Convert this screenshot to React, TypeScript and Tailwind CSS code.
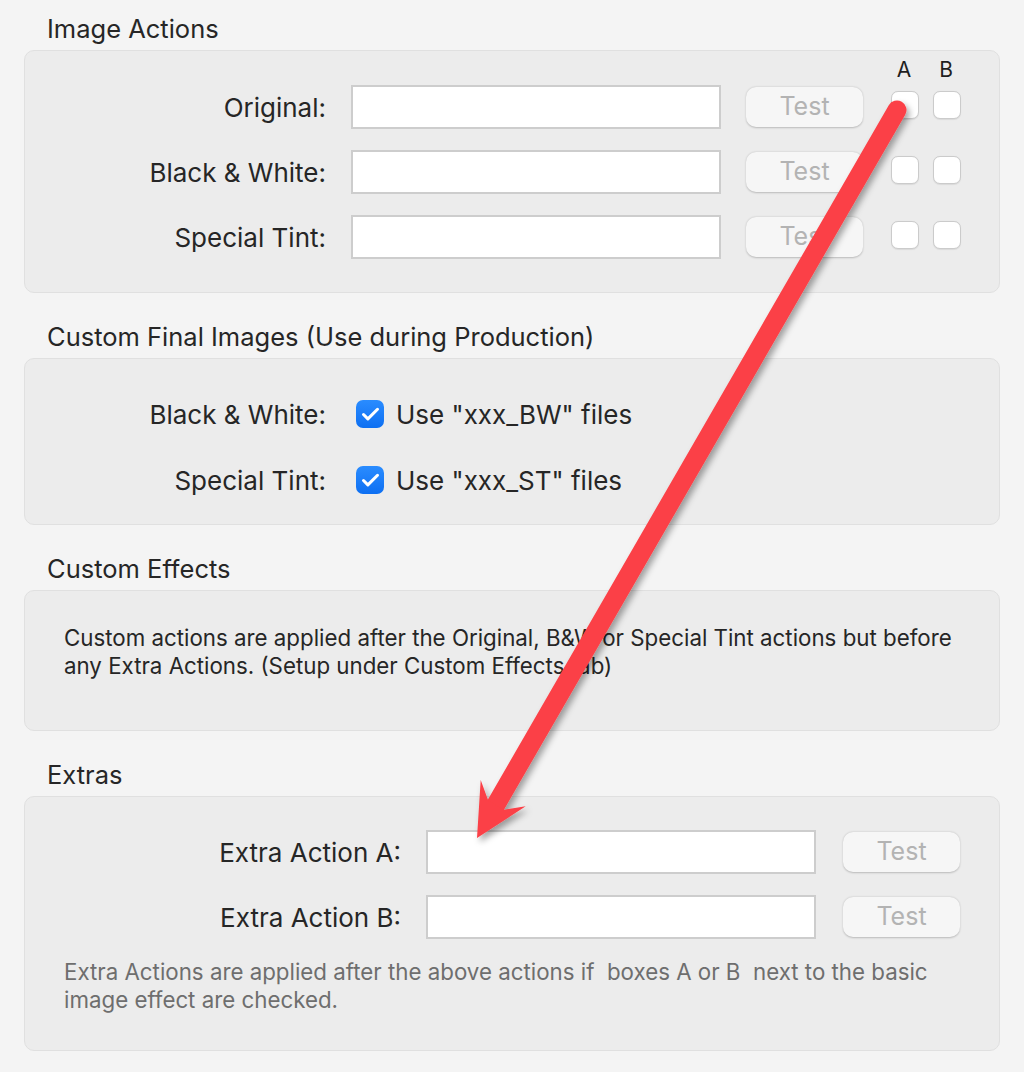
import { Check } from "lucide-react"

function TextBox({ width }: { width: string }) {
  return <div className={`h-[44px] ${width} border-2 border-[#cdcdcd] bg-white`} />
}

function TestButton() {
  return (
    <div className="flex h-[40px] w-[117px] items-center justify-center rounded-[10px] bg-[#f6f6f6] text-[25px] text-[#b3b3b3] shadow-[0_0.5px_2px_rgba(0,0,0,0.22)]">
      Test
    </div>
  )
}

function EmptyBox() {
  return (
    <div className="h-[28px] w-[28px] rounded-[7px] border border-[#cbcbcb] bg-white shadow-[0_0.5px_1px_rgba(0,0,0,0.08)]" />
  )
}

function CheckedBox() {
  return (
    <div className="flex h-[28px] w-[28px] items-center justify-center rounded-[7px] bg-gradient-to-b from-[#2a8cff] to-[#0c6ff2]">
      <Check className="h-[21px] w-[21px] text-white" strokeWidth={3.5} />
    </div>
  )
}

function Section({ title, children, first }: { title: string; children: React.ReactNode; first?: boolean }) {
  return (
    <section className={first ? "" : "mt-[28px]"}>
      <h2 className="mb-[5px] h-[32px] pl-[47px] text-[25.5px] leading-[32px] text-[#262626]">{title}</h2>
      <div className="mx-[24px] rounded-[10px] border border-[#e0e0e0] bg-[#ececec]">{children}</div>
    </section>
  )
}

function ActionRow({ label }: { label: string }) {
  return (
    <div className="flex h-[44px] items-center">
      <div className="w-[301px] text-right text-[26px] text-[#262626]">{label}</div>
      <div className="ml-[25px]">
        <TextBox width="w-[370px]" />
      </div>
      <div className="ml-[25px]">
        <TestButton />
      </div>
      <div className="ml-[28px] -mt-[4px] flex gap-[14px]">
        <EmptyBox />
        <EmptyBox />
      </div>
    </div>
  )
}

function FinalRow({ label, text }: { label: string; text: string }) {
  return (
    <div className="flex h-[44px] items-center">
      <div className="w-[301px] text-right text-[26px] text-[#262626]">{label}</div>
      <div className="ml-[30px]">
        <CheckedBox />
      </div>
      <div className="ml-[12px] text-[26px] text-[#262626]">{text}</div>
    </div>
  )
}

function ExtraRow({ label }: { label: string }) {
  return (
    <div className="flex h-[44px] items-center">
      <div className="w-[376px] text-right text-[26px] text-[#262626]">{label}</div>
      <div className="ml-[25px]">
        <TextBox width="w-[390px]" />
      </div>
      <div className="ml-[27px]">
        <TestButton />
      </div>
    </div>
  )
}

function Arrow() {
  return (
    <svg className="pointer-events-none absolute left-0 top-0" width="1024" height="1072" viewBox="0 0 1024 1072">
      <defs>
        <filter id="shadow" x="-20%" y="-20%" width="140%" height="140%">
          <feDropShadow dx="3" dy="4" stdDeviation="3" floodColor="#000" floodOpacity="0.35" />
        </filter>
      </defs>
      <g filter="url(#shadow)" fill="#fb4146" stroke="#fb4146">
        <line x1="897" y1="110" x2="494" y2="808" strokeWidth="19" strokeLinecap="round" />
        <polygon points="477,838 480.7,780 488.3,800.7 503.9,809.7 525.7,806.2" stroke="none" />
      </g>
    </svg>
  )
}

export default function App() {
  return (
    <div className="relative h-[1072px] w-[1024px] overflow-hidden bg-[#f4f4f4] pt-[13px] font-['Inter',sans-serif]">
      <Section title="Image Actions" first>
        <div className="pb-[33px] pt-[5px]">
          <div className="flex h-[28px] items-center pl-[865px] text-[21px] text-[#1f1f1f]">
            <span className="w-[28px] text-center">A</span>
            <span className="ml-[14px] w-[28px] text-center">B</span>
          </div>
          <div className="mt-[1px] flex flex-col gap-[21px]">
            <ActionRow label="Original:" />
            <ActionRow label="Black & White:" />
            <ActionRow label="Special Tint:" />
          </div>
        </div>
      </Section>

      <Section title="Custom Final Images (Use during Production)">
        <div className="flex flex-col gap-[22px] pb-[22px] pt-[33px]">
          <FinalRow label="Black & White:" text={'Use "xxx_BW" files'} />
          <FinalRow label="Special Tint:" text={'Use "xxx_ST" files'} />
        </div>
      </Section>

      <Section title="Custom Effects">
        <div className="h-[139px] px-[39px] pt-[33px] text-[22.3px] leading-[28px] text-[#262626]">
          Custom actions are applied after the Original, B&amp;W or Special Tint actions but before
          <br />
          any Extra Actions. (Setup under Custom Effects tab)
        </div>
      </Section>

      <Section title="Extras">
        <div className="pb-[36px] pt-[33px]">
          <div className="flex flex-col gap-[21px]">
            <ExtraRow label="Extra Action A:" />
            <ExtraRow label="Extra Action B:" />
          </div>
          <p className="mt-[19px] px-[39px] text-[22.3px] leading-[28px] text-[#6e6e6e]">
            Extra Actions are applied after the above actions if&nbsp; boxes A or B&nbsp; next to the basic
            <br />
            image effect are checked.
          </p>
        </div>
      </Section>

      <Arrow />
    </div>
  )
}
